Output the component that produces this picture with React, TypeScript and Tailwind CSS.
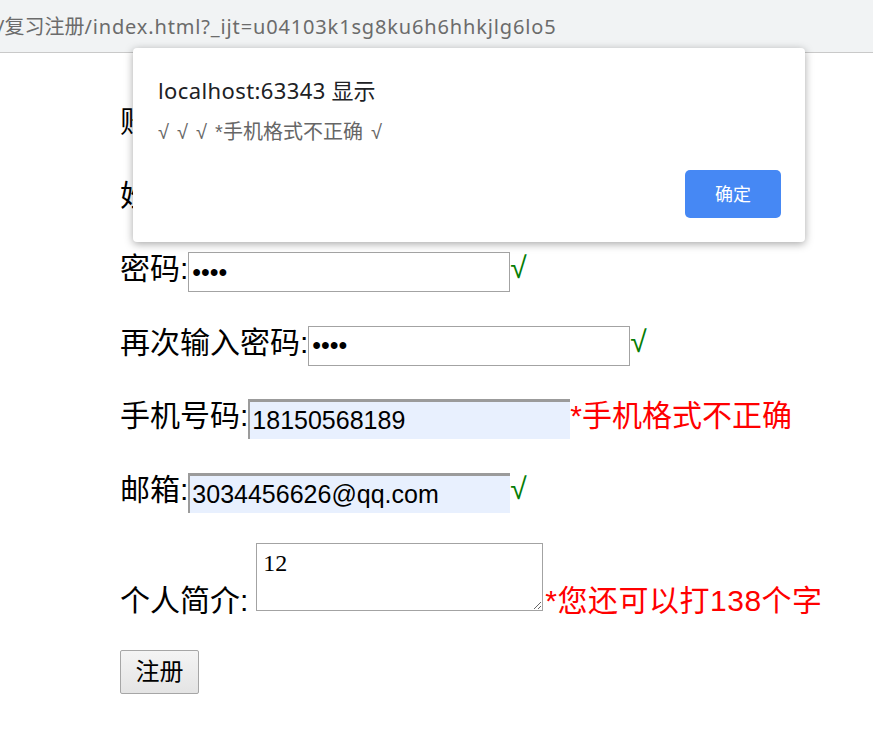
import React from "react";

const LABEL_FONT = '"Liberation Sans","Noto Sans CJK SC",sans-serif';
const UI_FONT = '"Noto Sans","Noto Sans CJK SC",sans-serif';

function Row({
  label,
  children,
  after,
  ok,
}: {
  label: string;
  children: React.ReactNode;
  after?: string;
  ok?: boolean;
}) {
  return (
    <div className="flex h-[40px] items-center">
      <span className="pb-[6px] text-[30px] leading-none text-black whitespace-nowrap">{label}</span>
      {children}
      {ok ? (
        <span className="pb-[8px] text-[30px] leading-none text-[#067d06]">√</span>
      ) : null}
      {after ? (
        <span className="pb-[6px] text-[30px] leading-none text-[#ff0000] whitespace-nowrap">{after}</span>
      ) : null}
    </div>
  );
}

const plainInput =
  "h-[40px] w-[322px] border border-[#a3a3a3] bg-white px-[3px] text-[25px] text-black outline-none";
const autoInput =
  "h-[40px] w-[322px] border-solid border-t-[3px] border-l-[2px] border-r-0 border-b-0 border-t-[#9b9b9b] border-l-[#9b9b9b] bg-[#e8f0fe] pl-[2px] pr-[3px] text-[25px] text-black outline-none";

export default function App() {
  return (
    <div className="relative min-h-[744px] w-full overflow-hidden bg-white" style={{ fontFamily: LABEL_FONT }}>
      {/* address bar */}
      <div className="flex h-[53px] items-center border-b border-[#c9c9c9] bg-[#f1f3f4]">
        <span
          className="ml-[-3px] pt-[2px] text-[20px] leading-none text-[#6b6b6b] whitespace-nowrap"
          style={{ fontFamily: UI_FONT }}
        >
          /复习注册<span className="tracking-[0.85px]">/index.html?_ijt=u04103k1sg8ku6h6hhkjlg6lo5</span>
        </span>
      </div>

      {/* form */}
      <div className="flex flex-col pl-[120px] pt-[52px]">
        <div className="flex flex-col gap-[33.6px]">
          <Row label="账号:" ok>
            <input className={plainInput} style={{ fontFamily: LABEL_FONT }} readOnly defaultValue="" />
          </Row>
          <Row label="姓名:" ok>
            <input className={plainInput} style={{ fontFamily: LABEL_FONT }} readOnly defaultValue="" />
          </Row>
          <Row label="密码:" ok>
            <input
              type="password"
              className={plainInput}
              style={{ fontFamily: LABEL_FONT }}
              readOnly
              defaultValue="1234"
            />
          </Row>
          <Row label="再次输入密码:" ok>
            <input
              type="password"
              className={plainInput}
              style={{ fontFamily: LABEL_FONT }}
              readOnly
              defaultValue="1234"
            />
          </Row>
          <Row label="手机号码:" after="*手机格式不正确">
            <input className={autoInput} style={{ fontFamily: LABEL_FONT }} readOnly defaultValue="18150568189" />
          </Row>
          <Row label="邮箱:" ok>
            <input
              className={autoInput}
              style={{ fontFamily: LABEL_FONT }}
              readOnly
              defaultValue="3034456626@qq.com"
            />
          </Row>
        </div>

        <div className="mt-[30px] flex items-end">
          <span className="mb-[-5px] mr-[8px] text-[30px] leading-none text-black whitespace-nowrap">个人简介:</span>
          <textarea
            className="h-[68px] w-[287px] resize border border-[#a3a3a3] bg-white px-[6px] pt-[4px] text-[24px] leading-[30px] text-black outline-none"
            style={{ fontFamily: '"Liberation Serif","Noto Serif CJK SC",serif' }}
            readOnly
            defaultValue="12"
          />
          <span className="mb-[-5px] ml-[2px] text-[30px] leading-none tracking-[0.5px] text-[#ff0000] whitespace-nowrap">
            *您还可以打138个字
          </span>
        </div>

        <div className="mt-[39px] flex">
          <button
            type="button"
            className="h-[44px] w-[79px] rounded-[2px] border border-[#a6a6a6] bg-gradient-to-b from-[#f4f4f4] to-[#e4e4e4] text-[24px] leading-none text-black"
            style={{ fontFamily: LABEL_FONT }}
          >
            注册
          </button>
        </div>
      </div>

      {/* alert dialog */}
      <div
        className="absolute left-[133px] top-[48px] flex h-[194px] w-[672px] flex-col rounded-[4px] bg-white pl-[25px] pr-[24px] pt-[28px] shadow-[0_2px_8px_rgba(0,0,0,0.35)]"
        style={{ fontFamily: UI_FONT }}
      >
        <div className="text-[22px] leading-[28px] text-[#202124] whitespace-nowrap">
          <span className="tracking-[0.4px]">localhost:63343</span> 显示
        </div>
        <div
          className="mt-[14px] text-[20px] leading-[28px] text-[#666666] whitespace-nowrap [word-spacing:2.5px]"
          style={{ fontFamily: LABEL_FONT }}
        >
          √ √ √ *手机格式不正确 √
        </div>
        <div className="mt-[24px] flex justify-end">
          <button
            type="button"
            className="h-[48px] w-[96px] rounded-[5px] bg-[#4688f4] text-[18px] leading-none text-white"
            style={{ fontFamily: UI_FONT }}
          >
            确定
          </button>
        </div>
      </div>
    </div>
  );
}
